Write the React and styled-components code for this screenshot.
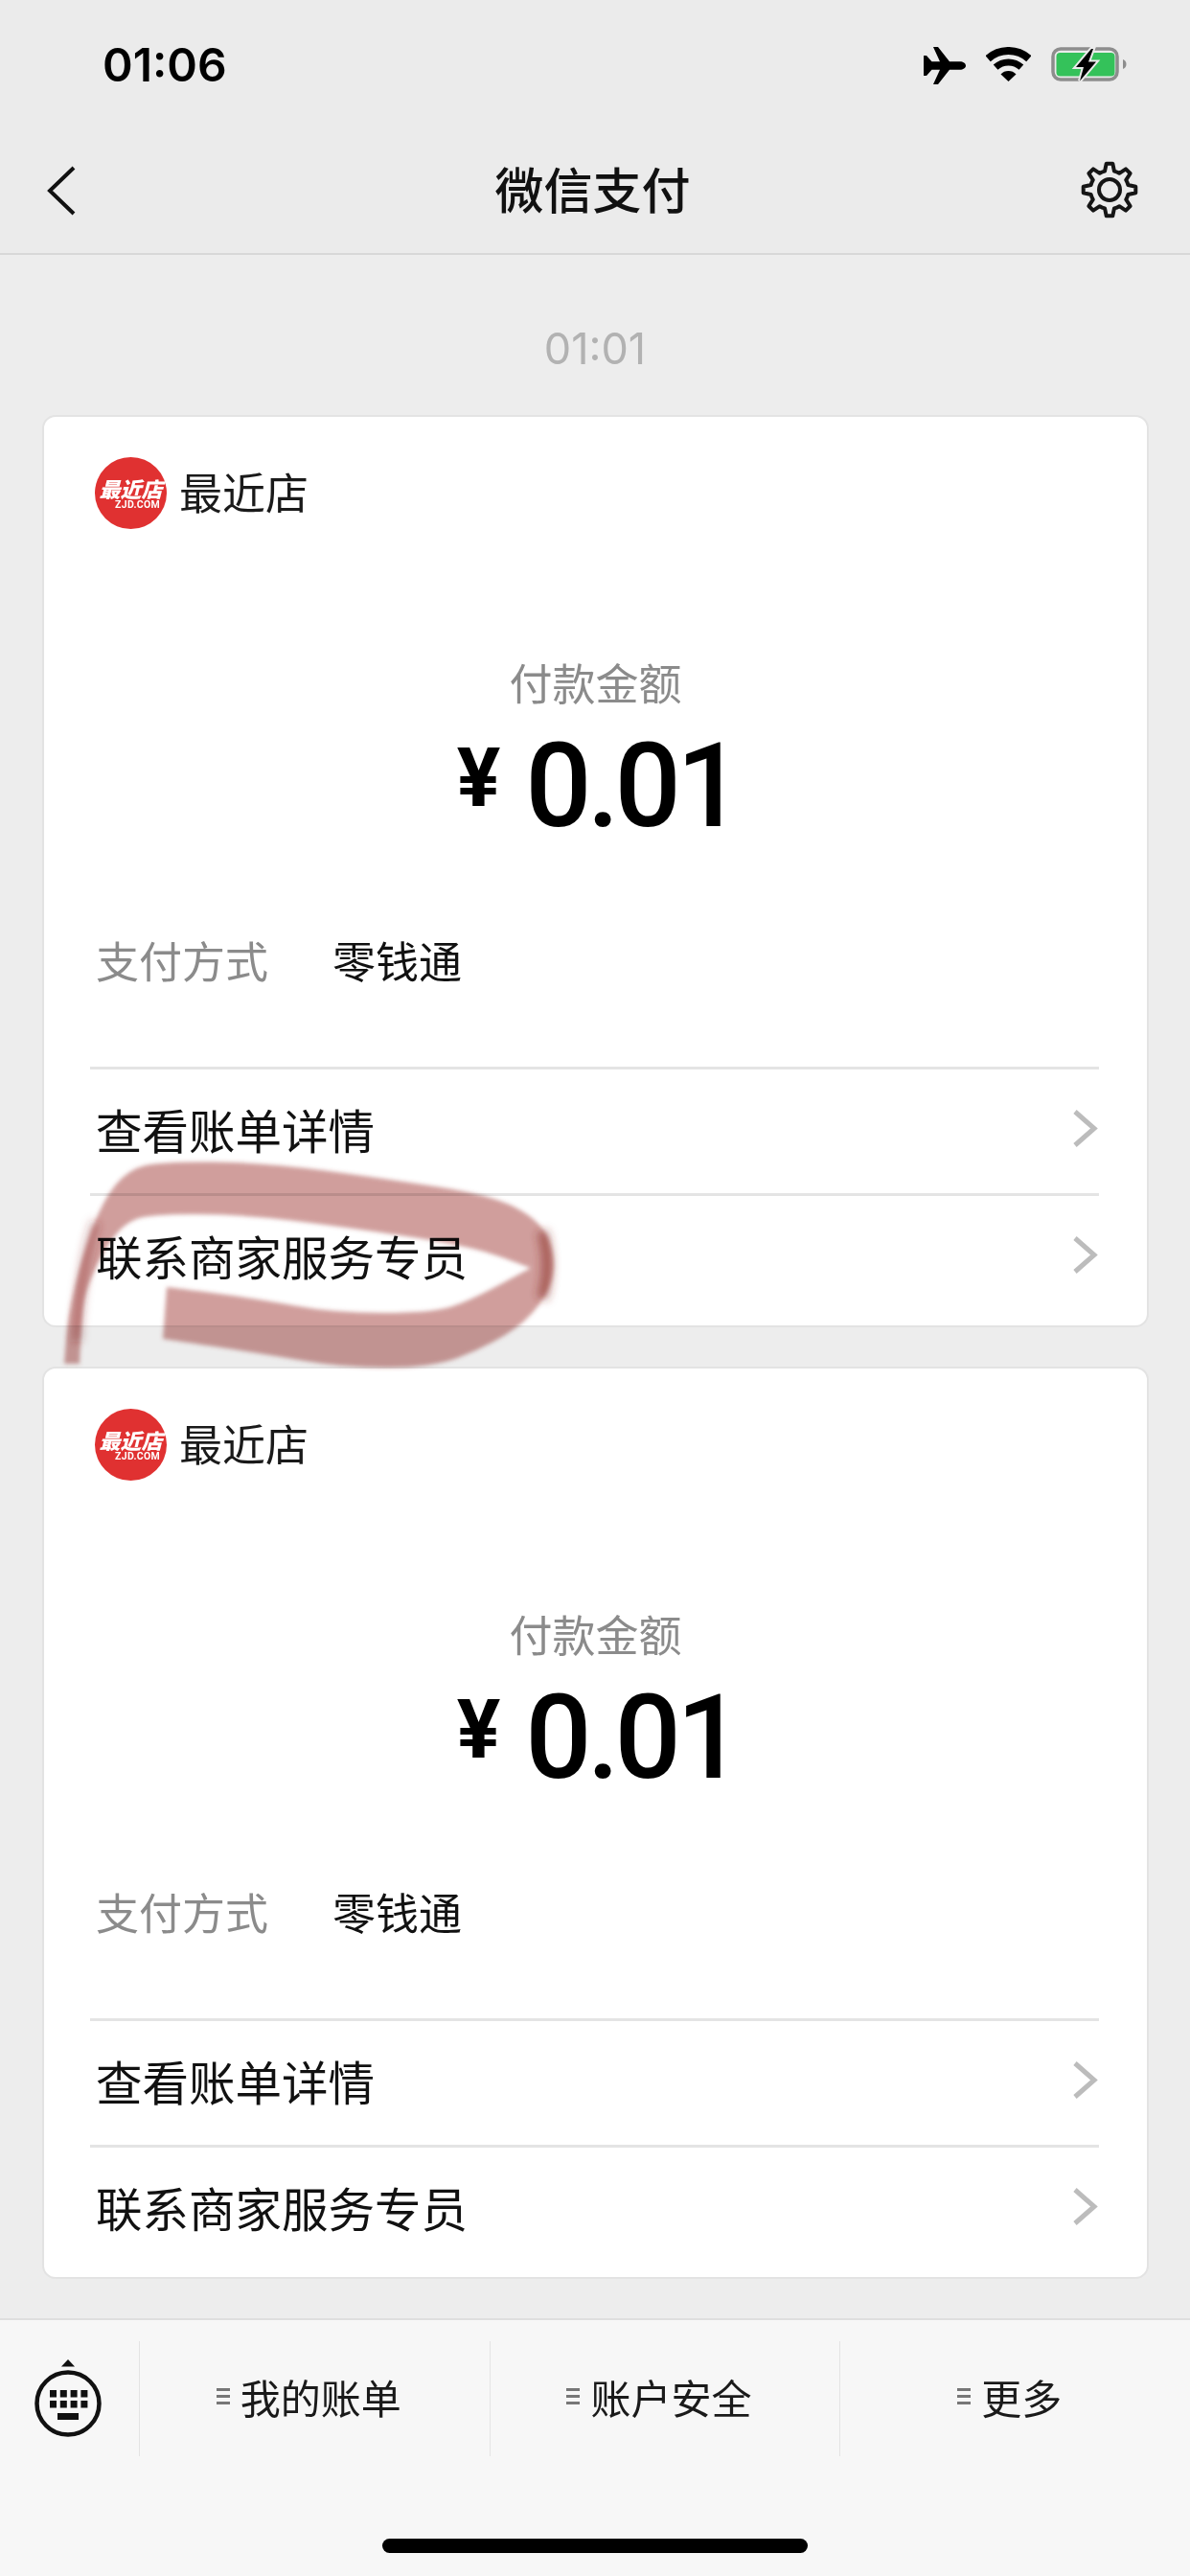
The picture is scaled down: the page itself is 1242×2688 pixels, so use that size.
import React from "react";
import styled, { createGlobalStyle } from "styled-components";

const GlobalStyle = createGlobalStyle`
  html, body {
    margin: 0;
    padding: 0;
    background: #ededed;
  }
  * {
    box-sizing: border-box;
  }
`;

const cjk = `"Noto Sans CJK SC", "Noto Sans", sans-serif`;

const Page = styled.div`
  position: relative;
  width: 1242px;
  height: 2688px;
  overflow: hidden;
  display: flex;
  flex-direction: column;
  background: #ededed;
  font-family: ${cjk};
  color: #111;
`;

const Header = styled.header`
  height: 266px;
  flex: none;
  background: #ebebeb;
  border-bottom: 2px solid #d8d8d8;
`;

const StatusBar = styled.div`
  height: 134px;
  display: flex;
  justify-content: space-between;
  padding: 49px 65px 0 107px;
`;

const Clock = styled.div`
  font-family: Inter, sans-serif;
  font-size: 48px;
  line-height: 38px;
  font-weight: 600;
  color: #000;
`;

const StatusIcons = styled.div`
  display: flex;
  align-items: flex-start;
  gap: 21px;
  svg {
    display: block;
  }
`;

const NavBar = styled.div`
  height: 130px;
  padding: 0 54px 0 49px;
  display: grid;
  grid-template-columns: 1fr auto 1fr;
  align-items: start;
`;

const NavIcon = styled.svg`
  display: block;
  margin-top: ${(p) => p.$top}px;
  justify-self: ${(p) => p.$side};
`;

const Title = styled.div`
  font-size: 51px;
  line-height: 64px;
  margin-top: 30px;
  font-weight: 500;
  color: #111;
`;

const Stamp = styled.div`
  height: 167px;
  padding-top: 70px;
  text-align: center;
  font-family: Inter, sans-serif;
  font-size: 45px;
  line-height: 56px;
  color: #b2b2b2;
`;

const Card = styled.section`
  width: 1155px;
  height: 952px;
  margin: 0 0 41px 44px;
  flex: none;
  background: #fff;
  border: 2px solid #e3e3e3;
  border-radius: 14px;
  overflow: hidden;
`;

const Merchant = styled.div`
  height: 75px;
  margin-top: 42px;
  padding-left: 53px;
  display: flex;
  align-items: center;
  gap: 13px;
`;

const Logo = styled.div`
  width: 75px;
  height: 75px;
  border-radius: 50%;
  background: #e03131;
  color: #fff;
  display: flex;
  flex-direction: column;
  align-items: center;
  padding-top: 19px;
`;

const LogoName = styled.div`
  font-size: 22px;
  line-height: 26px;
  font-weight: 900;
  font-style: italic;
  white-space: nowrap;
`;

const LogoSite = styled.div`
  font-family: Roboto, sans-serif;
  font-size: 10.5px;
  line-height: 10px;
  font-weight: 700;
  align-self: flex-end;
  margin-right: 7px;
  letter-spacing: 0.3px;
`;

const MerchantName = styled.div`
  font-size: 45px;
  line-height: 60px;
  margin-top: -3px;
  color: #1a1a1a;
`;

const AmountLabel = styled.div`
  margin-top: 130px;
  text-align: center;
  font-size: 45px;
  line-height: 60px;
  color: #8b8b8b;
`;

const Amount = styled.div`
  height: 128px;
  margin-top: 15px;
  display: flex;
  justify-content: center;
  align-items: baseline;
  font-family: Roboto, sans-serif;
  font-weight: 500;
  color: #000;
  padding-left: 4px;
`;

const Yen = styled.span`
  font-size: 85px;
  font-weight: 700;
  line-height: 128px;
  position: relative;
  top: -21px;
  margin-right: 26px;
`;

const Figure = styled.span`
  font-size: 122px;
  line-height: 128px;
  letter-spacing: -5px;
`;

const PayRow = styled.div`
  margin-top: 81px;
  padding-left: 54px;
  height: 70px;
  display: flex;
  align-items: center;
  font-size: 45px;
`;

const PayLabel = styled.span`
  width: 247px;
  color: #8b8b8b;
`;

const PayValue = styled.span`
  color: #111;
`;

const RowList = styled.div`
  margin: 77px 50px 0 48px;
`;

const LinkRow = styled.div`
  height: ${(p) => p.$height}px;
  border-top: 3px solid #e4e4e4;
  padding: 0 1px 6px 6px;
  display: flex;
  align-items: center;
  justify-content: space-between;
  font-size: 48.5px;
  color: #111;
`;

const TabBar = styled.nav`
  flex: 1;
  margin-top: 0;
  background: #f7f7f7;
  border-top: 2px solid #dedede;
  position: relative;
`;

const TabGrid = styled.div`
  display: grid;
  grid-template-columns: 145px repeat(3, 1fr);
  height: 120px;
  margin-top: 22px;
`;

const KeyboardCell = styled.div`
  padding: 19px 0 0 36px;
`;

const TabCell = styled.div`
  border-left: 1px solid #e4e4e4;
  padding: 0 12px 5px 0;
  display: flex;
  align-items: center;
  justify-content: center;
  gap: 11px;
  font-size: 42px;
  color: #1a1a1a;
`;

const MenuMark = styled.span`
  display: flex;
  flex-direction: column;
  gap: 4px;
  i {
    display: block;
    width: 14px;
    height: 3px;
    background: #777;
  }
`;

const HomeBar = styled.div`
  position: absolute;
  left: 399px;
  bottom: 24px;
  width: 444px;
  height: 15px;
  border-radius: 8px;
  background: #000;
`;

const Scribble = styled.svg`
  position: absolute;
  left: 0;
  top: 0;
  pointer-events: none;
`;

// repeated points keep the brush corners sharp
const BRUSH = [
  [67, 1423], [71, 1373], [85, 1313], [107, 1253], [134, 1220], [170, 1212],
  [277, 1213], [402, 1230], [513, 1247], [563, 1273], [579, 1307], [576, 1343],
  [549, 1380], [504, 1407], [451, 1427], [357, 1427], [277, 1413], [170, 1397], [170, 1397],
  [174, 1343], [174, 1343], [268, 1355], [348, 1370], [451, 1370], [491, 1357], [554, 1323], [554, 1323],
  [491, 1300], [357, 1280], [250, 1267], [156, 1267], [129, 1277], [107, 1307],
  [89, 1347], [85, 1380], [83, 1423],
];

// midpoints smoothing for the hand drawn stroke
const smoothPath = (pts) => {
  let d = `M${pts[0][0]} ${pts[0][1]} L${(pts[0][0] + pts[1][0]) / 2} ${(pts[0][1] + pts[1][1]) / 2}`;
  for (let i = 1; i < pts.length - 1; i++) {
    const mx = (pts[i][0] + pts[i + 1][0]) / 2;
    const my = (pts[i][1] + pts[i + 1][1]) / 2;
    d += ` Q${pts[i][0]} ${pts[i][1]} ${mx} ${my}`;
  }
  return `${d} L${pts[pts.length - 1][0]} ${pts[pts.length - 1][1]} Z`;
};

const gearPath = () => {
  const c = 30;
  const pt = (r, a) => `${(c + r * Math.sin(a)).toFixed(2)} ${(c - r * Math.cos(a)).toFixed(2)}`;
  let d = "";
  for (let i = 0; i < 8; i++) {
    const a = (i * Math.PI) / 4;
    d += `${i === 0 ? "M" : "A20 20 0 0 1 "}${pt(20, a - 0.25)} `;
    d += `L${pt(27.5, a - 0.12)} L${pt(27.5, a + 0.12)} L${pt(20, a + 0.25)} `;
  }
  return `${d}A20 20 0 0 1 ${pt(20, -0.25)} Z`;
};

const Airplane = () => (
  <svg width="44" height="39" viewBox="0 0 44 39">
    <path
      fill="#000"
      d="M44 19.5c0 2.5-3 4.3-6 4.3H27L15 39H10l7-15.2H8.5L3 30H0V9h3l5.5 6.2H17L10 0h5l12 15.2h11c3 0 6 1.8 6 4.3z"
    />
  </svg>
);

const Wifi = () => (
  <svg width="47" height="36" viewBox="0 0 47 36">
    <path d="M2.1 12.2A32 32 0 0 1 44.9 12.2" fill="none" stroke="#000" strokeWidth="8" />
    <path d="M10.1 21.1A20 20 0 0 1 36.9 21.1" fill="none" stroke="#000" strokeWidth="7" />
    <path d="M23.5 36L15.5 28.5A11 11 0 0 1 31.5 28.5Z" fill="#000" />
  </svg>
);

const Battery = () => (
  <svg width="80" height="37" viewBox="0 0 80 37">
    <rect x="2" y="2" width="67" height="32" rx="8" fill="none" stroke="#8d8d8d" strokeWidth="3.5" />
    <rect x="5.5" y="6" width="61" height="24.5" rx="4" fill="#34c25a" />
    <path d="M75 13c2 .6 3.5 2.6 3.5 5s-1.500 4.400-3.500 5z" fill="#8d8d8d" />
    <path
      d="M42 2L26 21H34L30 35.500L47 15.500H39L44 2z"
      fill="#000"
      stroke="#ebebeb"
      strokeWidth="4"
      paintOrder="stroke"
    />
  </svg>
);

const RowChevron = () => (
  <svg width="27" height="39" viewBox="0 0 27 39">
    <path d="M3 2L23 19.500L3 37" fill="none" stroke="#bcbcbc" strokeWidth="5" />
  </svg>
);

const KeyboardIcon = () => (
  <svg width="70" height="81" viewBox="0 0 70 81">
    <path d="M28 7.500L35 0L42 7.500Z" fill="#111" />
    <circle cx="35" cy="46" r="32.500" fill="none" stroke="#111" strokeWidth="4.500" />
    {[0, 1].map((row) =>
      [0, 1, 2, 3].map((col) => (
        <rect key={`${row}-${col}`} x={16 + col * 10.800} y={32 + row * 11} width="7" height="7.500" fill="#111" />
      ))
    )}
    <rect x="24" y="56" width="22" height="7" fill="#111" />
  </svg>
);

const PaymentCard = () => (
  <Card>
    <Merchant>
      <Logo>
        <LogoName>最近店</LogoName>
        <LogoSite>ZJD.COM</LogoSite>
      </Logo>
      <MerchantName>最近店</MerchantName>
    </Merchant>
    <AmountLabel>付款金额</AmountLabel>
    <Amount>
      <Yen>¥</Yen>
      <Figure>0.01</Figure>
    </Amount>
    <PayRow>
      <PayLabel>支付方式</PayLabel>
      <PayValue>零钱通</PayValue>
    </PayRow>
    <RowList>
      <LinkRow $height={132}>
        查看账单详情
        <RowChevron />
      </LinkRow>
      <LinkRow $height={132}>
        联系商家服务专员
        <RowChevron />
      </LinkRow>
    </RowList>
  </Card>
);

const tabs = ["我的账单", "账户安全", "更多"];

const App = () => {
  return (
    <Page>
      <GlobalStyle />
      <Header>
        <StatusBar>
          <Clock>01:06</Clock>
          <StatusIcons>
            <Airplane />
            <Wifi />
            <Battery />
          </StatusIcons>
        </StatusBar>
        <NavBar>
          <NavIcon $top={39} $side="start" width="30" height="52" viewBox="0 0 30 52">
            <path d="M28 2L3 26L28 50" fill="none" stroke="#111" strokeWidth="4" />
          </NavIcon>
          <Title>微信支付</Title>
          <NavIcon $top={34} $side="end" width="60" height="60" viewBox="0 0 60 60">
            <path d={gearPath()} fill="none" stroke="#151515" strokeWidth="4" strokeLinejoin="round" />
            <circle cx="30" cy="30" r="11" fill="none" stroke="#151515" strokeWidth="4" />
          </NavIcon>
        </NavBar>
      </Header>
      <Stamp>01:01</Stamp>
      <PaymentCard />
      <PaymentCard />
      <TabBar>
        <TabGrid>
          <KeyboardCell>
            <KeyboardIcon />
          </KeyboardCell>
          {tabs.map((tab) => (
            <TabCell key={tab}>
              <MenuMark>
                <i />
                <i />
                <i />
              </MenuMark>
              {tab}
            </TabCell>
          ))}
        </TabGrid>
        <HomeBar />
      </TabBar>
      <Scribble width="1242" height="2688" viewBox="0 0 1242 2688">
        <defs>
          <filter id="soft" filterUnits="userSpaceOnUse" x="0" y="1150" width="700" height="330">
            <feGaussianBlur stdDeviation="2" />
          </filter>
          <filter id="softer" filterUnits="userSpaceOnUse" x="0" y="1150" width="700" height="330">
            <feGaussianBlur stdDeviation="5" />
          </filter>
        </defs>
        <g style={{ mixBlendMode: "multiply" }}>
          <path d={smoothPath(BRUSH)} fill="#a9504a" fillOpacity="0.55" filter="url(#soft)" />
          <path d="M566 1285Q576 1320 566 1355" fill="none" stroke="#8a2f28" strokeOpacity="0.6" strokeWidth="11" filter="url(#softer)" />
          <path d="M100 1275Q84 1320 80 1400" fill="none" stroke="#8a2f28" strokeOpacity="0.35" strokeWidth="10" filter="url(#softer)" />
        </g>
      </Scribble>
    </Page>
  );
};

export default App;
